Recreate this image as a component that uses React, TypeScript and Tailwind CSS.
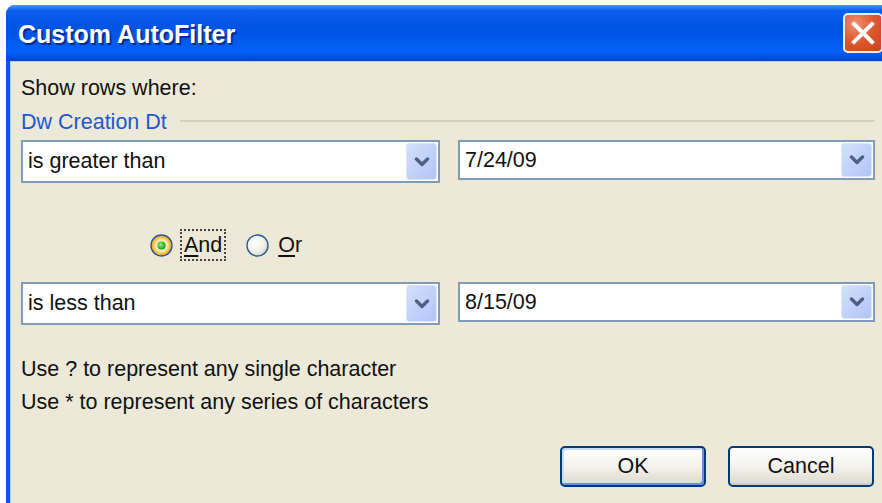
const ui = "font-['Liberation_Sans','Arial',sans-serif]";

function Chevron() {
  return (
    <svg width="16" height="10" viewBox="0 0 16 10">
      <path d="M2.5 2 L8 7.5 L13.5 2" fill="none" stroke="#4d6185" strokeWidth="3.4" strokeLinecap="round" strokeLinejoin="round" />
    </svg>
  );
}

interface ComboProps {
  value: string;
  className: string;
}

// XP style combo box: white field with the blue drop button on the right
function Combo({ value, className }: ComboProps) {
  return (
    <div className={`flex items-stretch border-2 border-[#7f9db9] bg-white ${className}`}>
      <span className="flex flex-1 items-center pl-[5px] text-[21.5px] text-[#111]">{value}</span>
      <span className="m-[1px] flex w-[31px] items-center justify-center rounded-[3px] border border-[#dce6fd] bg-gradient-to-br from-[#d3e0fd] to-[#b1c5f6]">
        <Chevron />
      </span>
    </div>
  );
}

function Radio({ checked }: { checked: boolean }) {
  if (checked) {
    return (
      <svg width="23" height="23" viewBox="0 0 23 23">
        <defs>
          <radialGradient id="ring" cx="50%" cy="50%" r="50%">
            <stop offset="55%" stopColor="#fde9ad" />
            <stop offset="75%" stopColor="#f8c24e" />
            <stop offset="100%" stopColor="#eea22b" />
          </radialGradient>
          <radialGradient id="dot" cx="40%" cy="40%" r="60%">
            <stop offset="0%" stopColor="#8ef08e" />
            <stop offset="100%" stopColor="#1c9a1c" />
          </radialGradient>
        </defs>
        <circle cx="11.5" cy="11.5" r="10.5" fill="url(#ring)" stroke="#2c5a87" strokeWidth="1.4" />
        <circle cx="11.5" cy="11.5" r="4" fill="url(#dot)" />
      </svg>
    );
  }
  return (
    <svg width="23" height="23" viewBox="0 0 23 23">
      <defs>
        <radialGradient id="plain" cx="38%" cy="38%" r="70%">
          <stop offset="0%" stopColor="#ffffff" />
          <stop offset="60%" stopColor="#f0efea" />
          <stop offset="100%" stopColor="#d2d0c6" />
        </radialGradient>
      </defs>
      <circle cx="11.5" cy="11.5" r="10.5" fill="url(#plain)" stroke="#2c5d8c" strokeWidth="1.4" />
    </svg>
  );
}

function CloseButton() {
  return (
    <div className="mr-[9px] flex h-[40px] w-[40px] items-center justify-center rounded-[5px] border-2 border-[#f3ede9] bg-[radial-gradient(circle_at_30%_25%,#ef9272_0%,#df5a30_45%,#c8411b_100%)]">
      <svg width="24" height="24" viewBox="0 0 24 24">
        <path d="M3 3 L21 21 M21 3 L3 21" stroke="#ffffff" strokeWidth="4" strokeLinecap="square" />
      </svg>
    </div>
  );
}

interface ButtonProps {
  label: string;
  isDefault?: boolean;
}

function DialogButton({ label, isDefault }: ButtonProps) {
  return (
    <button
      type="button"
      className={`h-[41px] w-[146px] rounded-[5px] border-2 border-[#003c74] bg-gradient-to-b from-[#ffffff] via-[#f3f2ed] to-[#dcd8cc] text-[21.5px] text-[#111] ${
        isDefault ? 'shadow-[inset_-2px_-2px_0_#6a8ee8,inset_2px_2px_0_#c8dafc]' : 'shadow-[inset_0_-2px_0_#d2cdc0]'
      }`}
    >
      {label}
    </button>
  );
}

export default function App() {
  return (
    <div className={`h-[503px] w-[882px] overflow-hidden bg-white ${ui}`}>
      <div className="ml-[6px] mt-[5px] flex h-[520px] w-[886px] flex-col overflow-hidden rounded-t-[9px] bg-[#0a58ea]">
        <div className="flex h-[56px] shrink-0 items-center justify-between bg-[linear-gradient(180deg,#4a94f8_0%,#0c5eec_10%,#0054e3_40%,#0259ee_65%,#0362f6_82%,#0046d2_100%)]">
          <span className="pl-[12px] pt-[4px] text-[25px] font-bold text-white [text-shadow:2px_2px_0_#0a2a8a]">Custom AutoFilter</span>
          <CloseButton />
        </div>
        <div className="mx-[4px] flex flex-1 flex-col border-x border-t border-[#b9cbef] bg-[#ece9d8] pl-[10px] pr-[12px] pt-[14px] text-[21.5px] text-[#111]">
          <div className="h-[24px] leading-[24px]">Show rows where:</div>
          <div className="mt-[10px] flex h-[24px] items-center leading-[24px]">
            <span className="text-[#1d58cc]">Dw Creation Dt</span>
            <span className="mb-[3px] ml-[13px] h-[2px] flex-1 bg-[#d4d2c2]" />
          </div>
          <div className="mt-[6px] flex h-[43px] items-start gap-[18px]">
            <Combo value="is greater than" className="h-[43px] w-[419px]" />
            <Combo value="7/24/09" className="h-[40px] w-[417px]" />
          </div>
          <div className="mt-[46px] flex h-[32px] items-center pl-[129px]">
            <Radio checked />
            <span className="ml-[7px] flex h-[32px] items-center border-2 border-dotted border-[#444] px-[2px]">
              <span className="underline underline-offset-[3px]">A</span>nd
            </span>
            <span className="ml-[20px] flex items-center">
              <Radio checked={false} />
            </span>
            <span className="ml-[9px]">
              <span className="underline underline-offset-[3px]">O</span>r
            </span>
          </div>
          <div className="mt-[21px] flex h-[43px] items-start gap-[18px]">
            <Combo value="is less than" className="h-[43px] w-[419px]" />
            <Combo value="8/15/09" className="h-[40px] w-[417px]" />
          </div>
          <div className="mt-[28px] leading-[33px]">
            <div>Use ? to represent any single character</div>
            <div>Use * to represent any series of characters</div>
          </div>
          <div className="mt-[27px] flex justify-end gap-[22px] pr-[1px]">
            <DialogButton label="OK" isDefault />
            <DialogButton label="Cancel" />
          </div>
        </div>
      </div>
    </div>
  );
}
